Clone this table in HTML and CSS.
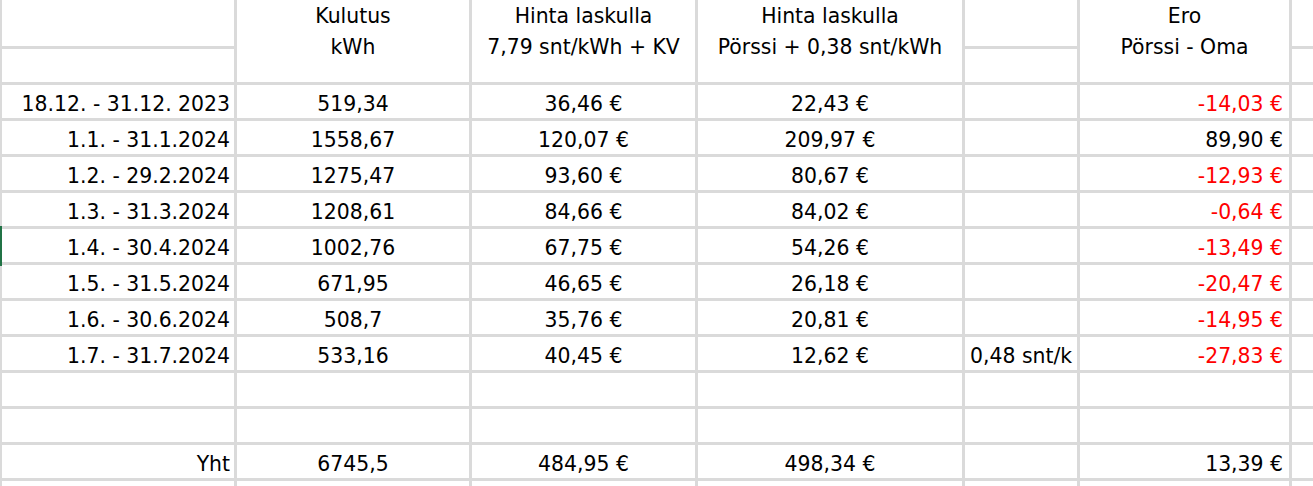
FILE: index.html
```html
<!DOCTYPE html>
<html lang="fi">
<head>
<meta charset="utf-8">
<title>Sähkön hinta</title>
<link rel="stylesheet" href="styles.css">
</head>
<body>
<div class="sheet">
  <!-- header row 1 -->
  <div class="c"></div>
  <div class="h span2">Kulutus<br>kWh</div>
  <div class="h span2">Hinta laskulla<br>7,79 snt/kWh + KV</div>
  <div class="h span2">Hinta laskulla<br>Pörssi + 0,38 snt/kWh</div>
  <div class="c"></div>
  <div class="h span2">Ero<br>Pörssi - Oma</div>
  <div class="c"></div>
  <!-- header row 2 -->
  <div class="c"></div>
  <div class="c"></div>
  <div class="c"></div>

  <div class="c r">18.12. - 31.12. 2023</div><div class="c m">519,34</div><div class="c m">36,46 €</div><div class="c m">22,43 €</div><div class="c"></div><div class="c e neg">-14,03 €</div><div class="c"></div>
  <div class="c r">1.1. - 31.1.2024</div><div class="c m">1558,67</div><div class="c m">120,07 €</div><div class="c m">209,97 €</div><div class="c"></div><div class="c e">89,90 €</div><div class="c"></div>
  <div class="c r">1.2. - 29.2.2024</div><div class="c m">1275,47</div><div class="c m">93,60 €</div><div class="c m">80,67 €</div><div class="c"></div><div class="c e neg">-12,93 €</div><div class="c"></div>
  <div class="c r">1.3. - 31.3.2024</div><div class="c m">1208,61</div><div class="c m">84,66 €</div><div class="c m">84,02 €</div><div class="c"></div><div class="c e neg">-0,64 €</div><div class="c"></div>
  <div class="c r sel">1.4. - 30.4.2024</div><div class="c m">1002,76</div><div class="c m">67,75 €</div><div class="c m">54,26 €</div><div class="c"></div><div class="c e neg">-13,49 €</div><div class="c"></div>
  <div class="c r">1.5. - 31.5.2024</div><div class="c m">671,95</div><div class="c m">46,65 €</div><div class="c m">26,18 €</div><div class="c"></div><div class="c e neg">-20,47 €</div><div class="c"></div>
  <div class="c r">1.6. - 30.6.2024</div><div class="c m">508,7</div><div class="c m">35,76 €</div><div class="c m">20,81 €</div><div class="c"></div><div class="c e neg">-14,95 €</div><div class="c"></div>
  <div class="c r">1.7. - 31.7.2024</div><div class="c m">533,16</div><div class="c m">40,45 €</div><div class="c m">12,62 €</div><div class="c l">0,48 snt/k</div><div class="c e neg">-27,83 €</div><div class="c"></div>
  <div class="c"></div><div class="c"></div><div class="c"></div><div class="c"></div><div class="c"></div><div class="c"></div><div class="c"></div>
  <div class="c"></div><div class="c"></div><div class="c"></div><div class="c"></div><div class="c"></div><div class="c"></div><div class="c"></div>
  <div class="c r">Yht</div><div class="c m">6745,5</div><div class="c m">484,95 €</div><div class="c m">498,34 €</div><div class="c"></div><div class="c e">13,39 €</div><div class="c"></div>
  <div class="c"></div><div class="c"></div><div class="c"></div><div class="c"></div><div class="c"></div><div class="c"></div><div class="c"></div>
</div>
</body>
</html>
```

FILE: styles.css
```css
html, body {
  margin: 0;
  padding: 0;
  background: #ffffff;
  overflow: hidden;
}

body {
  width: 1313px;
  height: 486px;
  font-family: "DejaVu Sans", "Liberation Sans", sans-serif;
  font-size: 20.4px;
  color: #000000;
}

.sheet {
  display: grid;
  grid-template-columns: 232px 232px 223px 264px 112px 209px 1fr;
  grid-template-rows: 46px repeat(13, 33px);
  gap: 3px;
  padding-left: 2px;
  height: 486px;
  overflow: hidden;
  background: #dadada;
}

.c, .h {
  background: #ffffff;
  position: relative;
  white-space: nowrap;
  overflow: hidden;
}

.c {
  display: flex;
  align-items: flex-end;
  line-height: 24px;
  padding-bottom: 2px;
  box-sizing: border-box;
}

.h {
  text-align: center;
  line-height: 31px;
  padding-top: 1px;
  box-sizing: border-box;
}

.span2 {
  grid-row: span 2;
}

.r {
  justify-content: flex-end;
  padding-right: 4px;
}

.m {
  justify-content: center;
}

.e {
  justify-content: flex-end;
  padding-right: 6px;
}

.l {
  justify-content: flex-start;
  padding-left: 5px;
}

.neg {
  color: #ff0000;
}

.sel {
  overflow: visible;
}

.sel::before {
  content: "";
  position: absolute;
  left: -2px;
  top: -3px;
  bottom: -4px;
  width: 2px;
  background: #217346;
}
```
